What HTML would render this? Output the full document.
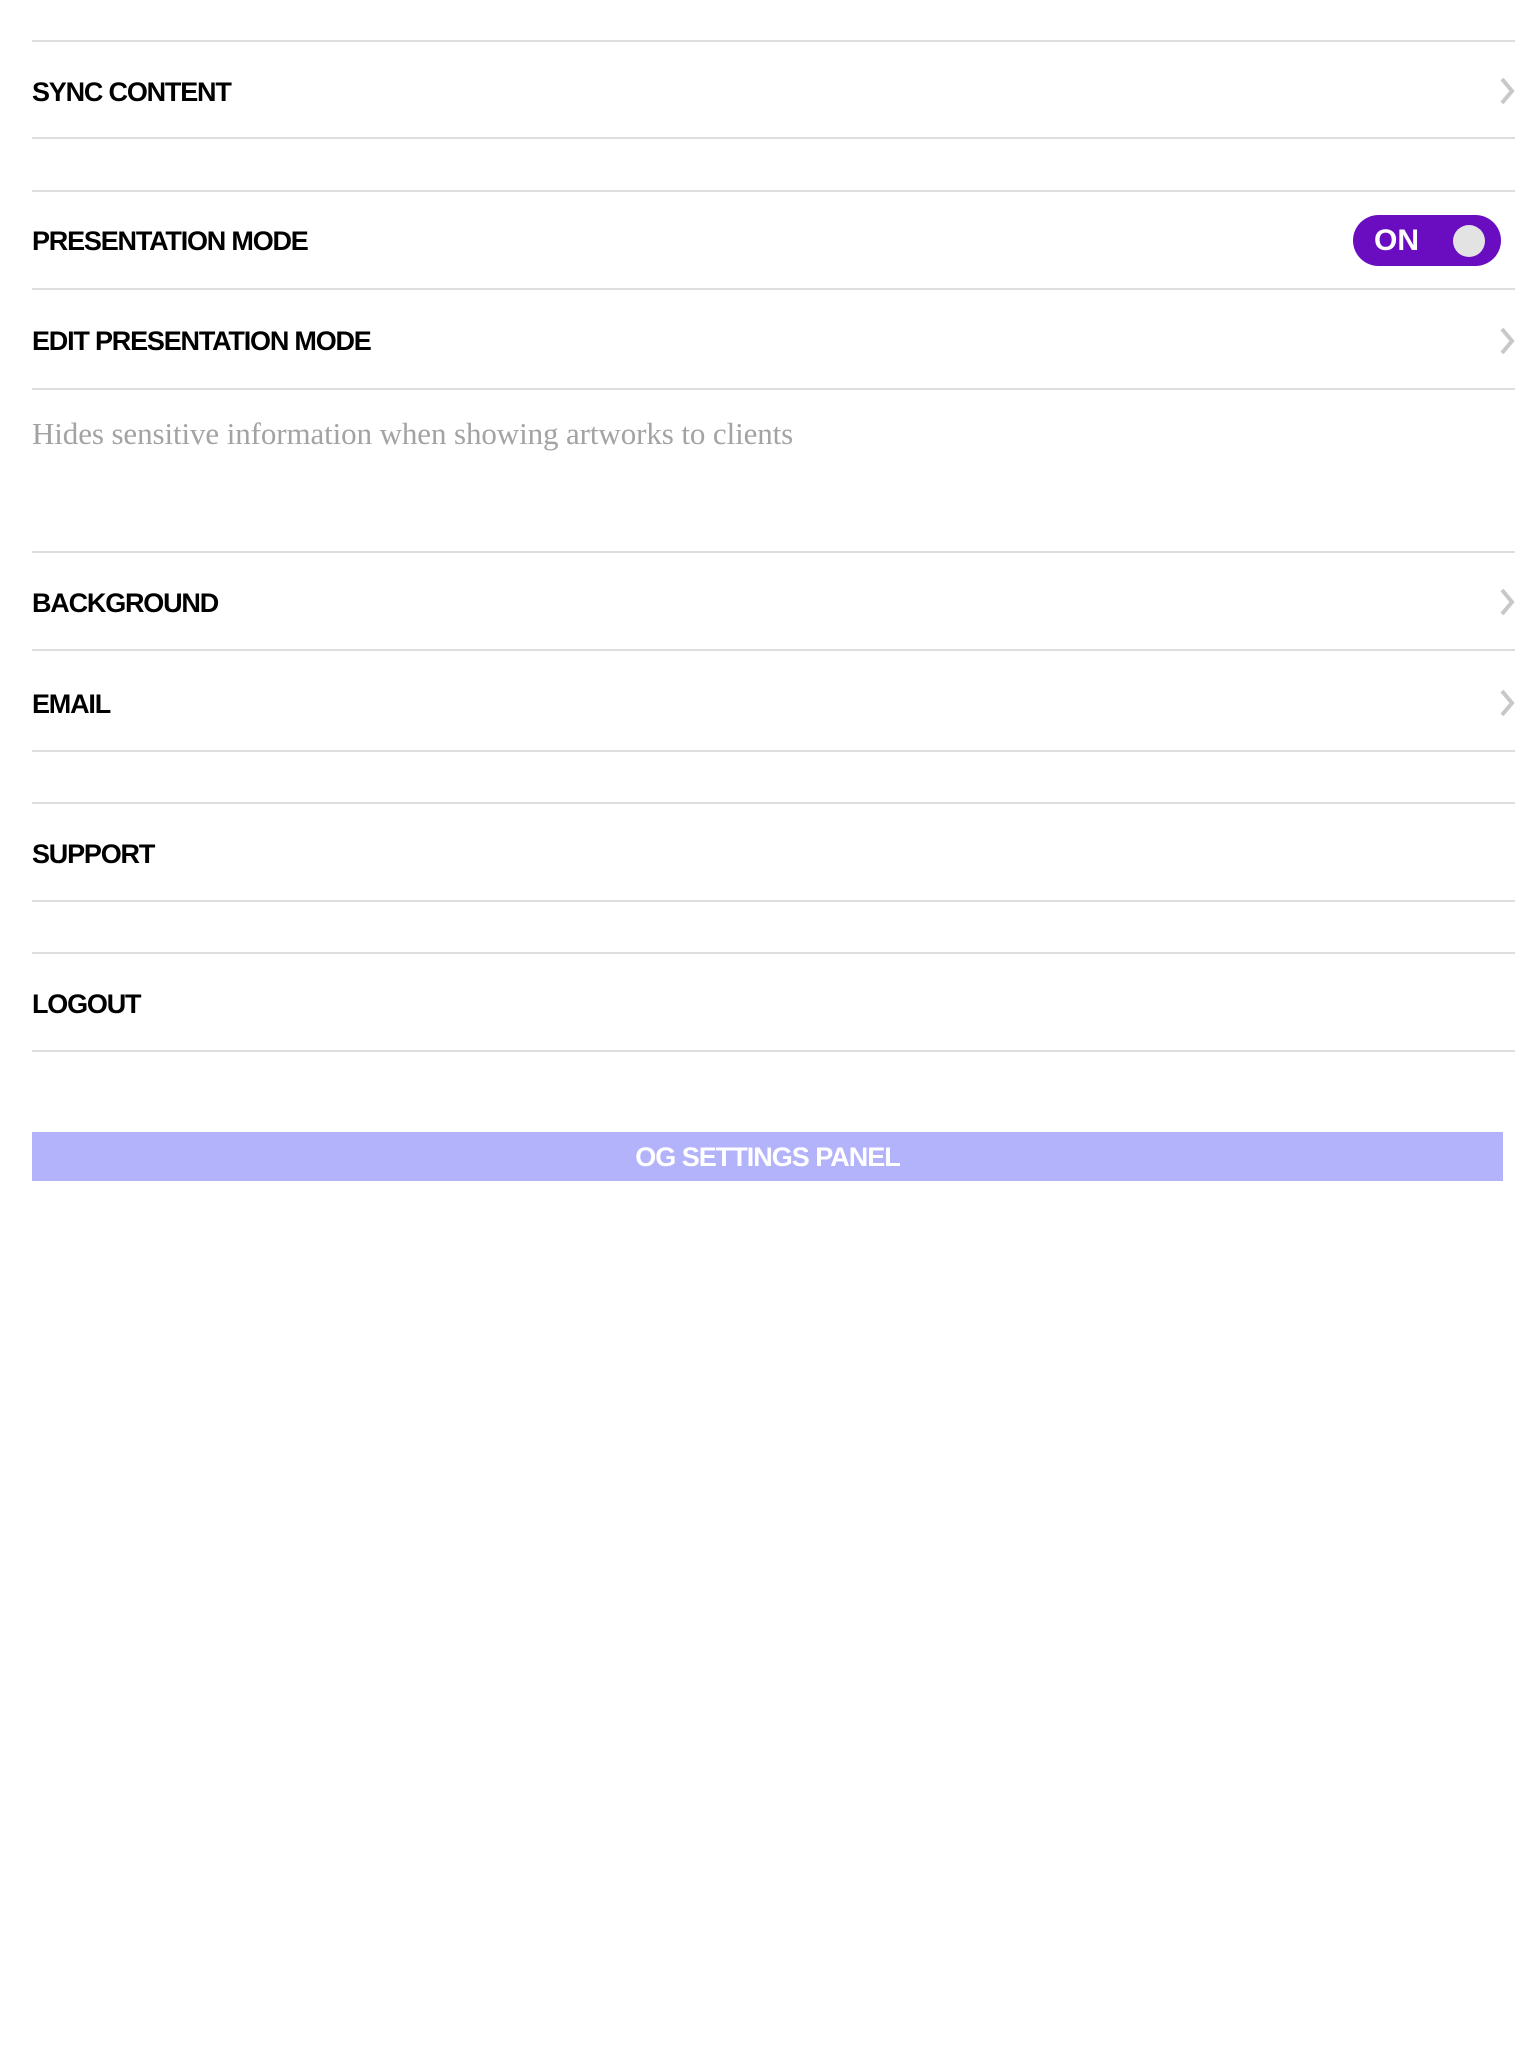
<!DOCTYPE html>
<html><head><meta charset="utf-8"><style>
html,body{margin:0;padding:0;background:#fff;width:1536px;height:2048px;overflow:hidden;position:relative}
.l{position:absolute;left:32px;width:1483px;height:2px;background:#dedede}
.t{position:absolute;left:32px;font-family:"Liberation Sans",sans-serif;font-weight:bold;font-size:27px;line-height:1;color:#000;letter-spacing:-1.2px;white-space:nowrap}
.c{position:absolute;left:1498px;width:18px;height:30px}
</style></head><body>
<div class="l" style="top:40px"></div>
<div class="l" style="top:137px"></div>
<div class="l" style="top:190px"></div>
<div class="l" style="top:288px"></div>
<div class="l" style="top:388px"></div>
<div class="l" style="top:551px"></div>
<div class="l" style="top:649px"></div>
<div class="l" style="top:750px"></div>
<div class="l" style="top:802px"></div>
<div class="l" style="top:900px"></div>
<div class="l" style="top:952px"></div>
<div class="l" style="top:1050px"></div>

<div class="t" style="top:79px">SYNC CONTENT</div>
<div class="t" style="top:228px">PRESENTATION MODE</div>
<div class="t" style="top:328px">EDIT PRESENTATION MODE</div>
<div class="t" style="top:590px">BACKGROUND</div>
<div class="t" style="top:691px">EMAIL</div>
<div class="t" style="top:841px">SUPPORT</div>
<div class="t" style="top:991px">LOGOUT</div>

<svg class="c" style="top:76px" viewBox="0 0 18 30"><path d="M4 3 L14 15 L4 27" fill="none" stroke="#c8c8c8" stroke-width="4"/></svg>
<svg class="c" style="top:326px" viewBox="0 0 18 30"><path d="M4 3 L14 15 L4 27" fill="none" stroke="#c8c8c8" stroke-width="4"/></svg>
<svg class="c" style="top:587px" viewBox="0 0 18 30"><path d="M4 3 L14 15 L4 27" fill="none" stroke="#c8c8c8" stroke-width="4"/></svg>
<svg class="c" style="top:688px" viewBox="0 0 18 30"><path d="M4 3 L14 15 L4 27" fill="none" stroke="#c8c8c8" stroke-width="4"/></svg>

<div style="position:absolute;left:1353px;top:215px;width:148px;height:51px;border-radius:26px;background:#6a0dc1"></div>
<div style="position:absolute;left:1374px;top:226px;font-family:'Liberation Sans',sans-serif;font-weight:bold;font-size:30px;line-height:1;color:#fff">ON</div>
<div style="position:absolute;left:1453px;top:225px;width:32px;height:32px;border-radius:50%;background:#e3e3e3"></div>

<div style="position:absolute;left:32px;top:418px;font-family:'Liberation Serif',serif;font-size:31px;line-height:1;color:#a3a3a3;white-space:nowrap;letter-spacing:-0.1px">Hides sensitive information when showing artworks to clients</div>

<div style="position:absolute;left:32px;top:1132px;width:1471px;height:49px;background:#b3b3fb;color:#fff;font-family:'Liberation Sans',sans-serif;font-weight:bold;font-size:27px;line-height:50px;text-align:center;letter-spacing:-1px">OG SETTINGS PANEL</div>
</body></html>
